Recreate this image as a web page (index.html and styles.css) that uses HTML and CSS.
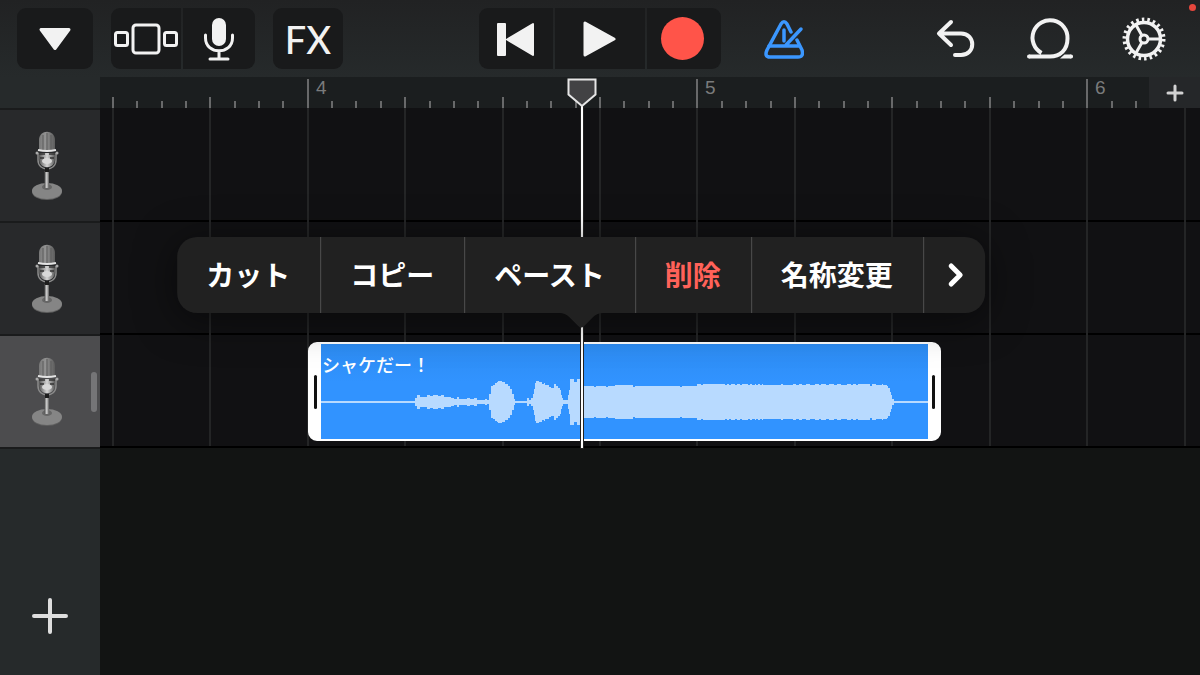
FILE: index.html
```html
<!DOCTYPE html>
<html lang="ja">
<head>
    <meta charset="UTF-8">
    <meta name="viewport" content="width=device-width, initial-scale=1.0">
    <title>GarageBand</title>
    <link rel="stylesheet" href="styles.css">
</head>
<body>
    <svg class="symbols" aria-hidden="true">
        <defs>
            <linearGradient id="micMetal">
                <stop offset="0" stop-color="#555"/>
                <stop offset="0.5" stop-color="#d5d5d5"/>
                <stop offset="1" stop-color="#5a5a5a"/>
            </linearGradient>
            <linearGradient id="micGrille">
                <stop offset="0" stop-color="#777"/>
                <stop offset="0.4" stop-color="#929292"/>
                <stop offset="1" stop-color="#5c5c5c"/>
            </linearGradient>
        </defs>
        <symbol id="mic" viewBox="0 0 32 70">
            <ellipse cx="15" cy="61" rx="15" ry="8" fill="#5f5f5f"/>
            <ellipse cx="15" cy="60" rx="15" ry="8" fill="#858585"/>
            <ellipse cx="15" cy="56" rx="5" ry="3" fill="#666"/>
            <path d="M12.500 40h4.500v17h-4.500z" fill="url(#micMetal)"/>
            <path d="M6 22v7c0 12 18 12 18 0v-7" fill="none" stroke="#8b8b8b" stroke-width="1.500"/>
            <path d="M13 37h4v4h-4z" fill="#1d1d1d"/>
            <path d="M7 22h16v6c0 11-16 11-16 0z" fill="url(#micMetal)"/>
            <path d="M7 19V9C7-2 23-2 23 9v10z" fill="url(#micGrille)"/>
            <path d="M11 4v15M15 2v17M19 4v15" stroke="#5a5a5a"/>
            <path d="M7 23h6M17 23h6M8 27h4M18 27h4" stroke="#333" stroke-width="1.500"/>
            <path d="M6 19q9 2 18 0" fill="none" stroke="#e4e4e4" stroke-width="2"/>
            <circle cx="5" cy="22" r="1.500" fill="#aaa"/>
            <circle cx="25" cy="22" r="1.500" fill="#aaa"/>
            <ellipse cx="15" cy="30" rx="5" ry="3" fill="#d8d8d8"/>
        </symbol>
    </svg>

    <header class="toolbar">
        <div class="toolbar-left">
            <button class="tool-btn browser-btn" aria-label="ブラウザ">
                <svg width="34" height="24" viewBox="0 0 34 24"><path d="M3 2.500h28L17 21.500z" fill="#f2f2f2" stroke="#f2f2f2" stroke-width="3" stroke-linejoin="round"/></svg>
            </button>
            <div class="btn-group">
                <button class="tool-btn view-btn" aria-label="トラック表示">
                    <svg width="64" height="32" viewBox="0 0 64 32" fill="none" stroke="#f2f2f2" stroke-width="3">
                        <rect x="1.500" y="9.500" width="12" height="13" rx="2"/>
                        <rect x="19" y="2" width="26" height="28" rx="3"/>
                        <rect x="50.500" y="9.500" width="12" height="13" rx="2"/>
                    </svg>
                </button>
                <button class="tool-btn input-btn" aria-label="入力">
                    <svg width="32" height="44" viewBox="0 0 32 44" fill="none" stroke="#f2f2f2" stroke-width="3" stroke-linecap="round">
                        <rect x="9" y="1" width="14" height="28" rx="7" fill="#f2f2f2" stroke="none"/>
                        <path d="M2.500 18v3c0 17 27 17 27 0v-3M16 34v7M7 42h18"/>
                    </svg>
                </button>
            </div>
            <button class="tool-btn fx-btn">FX</button>
        </div>

        <div class="btn-group transport">
            <button class="tool-btn rewind-btn" aria-label="先頭へ">
                <svg width="38" height="34" viewBox="0 0 38 34" fill="#f2f2f2" stroke="#f2f2f2" stroke-width="2" stroke-linejoin="round"><path d="M2 2h7v31H2zM11 17.500L37 2v31z"/></svg>
            </button>
            <button class="tool-btn play-btn" aria-label="再生">
                <svg width="34" height="38" viewBox="0 0 34 38"><path d="M3 3v32l29-16z" fill="#f2f2f2" stroke="#f2f2f2" stroke-width="3" stroke-linejoin="round"/></svg>
            </button>
            <button class="tool-btn record-btn" aria-label="録音"><span class="record-dot"></span></button>
        </div>

        <div class="toolbar-right">
            <button class="icon-btn metronome-btn" aria-label="メトロノーム">
                <svg width="40" height="40" viewBox="0 0 40 40" fill="none" stroke="#3b97ff" stroke-width="3.500" stroke-linecap="round" stroke-linejoin="round">
                    <path d="M27 13L23 5Q20 .5 17 5L3 31Q0 38 6 38h28q6 0 4-7l-5-10"/>
                    <path d="M5 27h30M20 11v11M22 26L37 10"/>
                </svg>
            </button>
            <button class="icon-btn" aria-label="取り消す">
                <svg width="40" height="40" viewBox="0 0 40 40" fill="none" stroke="#f2f2f2" stroke-width="4" stroke-linecap="round" stroke-linejoin="round"><path d="M15 3L3 14.500 15 26M3 14.500h22c15 0 15 21.500 0 21.500h-6"/></svg>
            </button>
            <button class="icon-btn" aria-label="ループ">
                <svg width="48" height="44" viewBox="0 0 48 44" fill="none" stroke="#f2f2f2" stroke-width="4">
                    <path d="M15.500 36A17.500 17.500 0 1 1 41.500 21.500C41.500 33 34 39.500 24 39.500H3"/>
                    <path d="M3 39.500h.1M45 39.500h.1" stroke-linecap="round"/>
                    <path d="M34 41.500l4.500-4H45v4z" fill="#f2f2f2" stroke="none"/>
                </svg>
            </button>
            <button class="icon-btn" aria-label="設定">
                <svg width="44" height="44" viewBox="0 0 44 44" fill="none" stroke="#f2f2f2">
                    <circle cx="22" cy="22" r="19.500" stroke-width="4" stroke-dasharray="2.500 3.069"/>
                    <circle cx="22" cy="22" r="16.500" stroke-width="3.500"/>
                    <circle cx="22" cy="22" r="4" stroke-width="3"/>
                    <path d="M27 22h11M19.500 17.700L14 8M19.500 26.300L14 36" stroke-width="3"/>
                </svg>
            </button>
        </div>
        <span class="rec-indicator"></span>
    </header>

    <main class="workspace">
        <aside class="track-list">
            <div class="track-corner"></div>
            <button class="track-head" aria-label="トラック 1"><svg class="mic-icon"><use href="#mic"/></svg></button>
            <button class="track-head" aria-label="トラック 2"><svg class="mic-icon"><use href="#mic"/></svg></button>
            <button class="track-head selected" aria-label="トラック 3"><svg class="mic-icon"><use href="#mic"/></svg><span class="track-grip"></span></button>
            <div class="track-footer">
                <button class="add-track" aria-label="トラックを追加">
                    <svg width="38" height="38" viewBox="0 0 38 38" stroke="#dedede" stroke-width="4" stroke-linecap="round"><path d="M19 3v32M3 19h32"/></svg>
                </button>
            </div>
        </aside>

        <section class="timeline">
            <div class="ruler" id="ruler">
                <button class="add-section" aria-label="セクションを追加">
                    <svg width="18" height="18" viewBox="0 0 18 18" stroke="#d2d2d2" stroke-width="3" stroke-linecap="round"><path d="M9 2v14M2 9h14"/></svg>
                </button>
            </div>
            <div class="lanes" id="lanes">
                <div class="lane"></div>
                <div class="lane"></div>
                <div class="lane">
                    <div class="region">
                        <span class="region-handle"></span>
                        <div class="region-body">
                            <span class="region-name">シャケだー！</span>
                            <svg class="waveform" viewBox="0 0 607 95" preserveAspectRatio="none"><path id="wave" fill="#b8daff" shape-rendering="crispEdges"/></svg>
                        </div>
                        <span class="region-handle"></span>
                    </div>
                </div>
            </div>

            <div class="playhead">
                <svg class="playhead-flag" width="30" height="30" viewBox="0 0 30 30"><path d="M1.500 1.500h27v15L15 28 1.500 16.500z" fill="#424244" stroke="#e6e6e6" stroke-width="2"/></svg>
            </div>

            <div class="edit-menu" role="menu">
                <button role="menuitem">カット</button>
                <button role="menuitem">コピー</button>
                <button role="menuitem">ペースト</button>
                <button role="menuitem" class="danger">削除</button>
                <button role="menuitem">名称変更</button>
                <button role="menuitem" class="more" aria-label="次へ">
                    <svg width="18" height="26" viewBox="0 0 18 26" fill="none" stroke="#fff" stroke-width="5" stroke-linecap="round" stroke-linejoin="round"><path d="M4 4l9 9-9 9"/></svg>
                </button>
                <svg class="menu-arrow" width="44" height="16" viewBox="0 0 44 16"><path d="M0 0Q6 0 10 4L19 13Q22 16 25 13L34 4Q38 0 44 0z" fill="#212121"/></svg>
            </div>
        </section>
    </main>

    <script src="script.js"></script>
</body>
</html>
```

FILE: styles.css
```css
* {
    box-sizing: border-box;
}
body {
    margin: 0;
    min-height: 100vh;
    display: flex;
    flex-direction: column;
    background-color: #121413;
    color: #fff;
    font-family: "Liberation Sans", "Noto Sans CJK JP", sans-serif;
    overflow: hidden;
}
button {
    margin: 0;
    padding: 0;
    border: none;
    background: none;
    color: inherit;
    font: inherit;
    cursor: pointer;
}
svg {
    display: block;
}
.symbols {
    position: absolute;
    width: 0;
    height: 0;
}

/* toolbar */
.toolbar {
    position: relative;
    display: grid;
    grid-template-columns: 1fr auto 1fr;
    padding: 8px 17px;
    background: linear-gradient(#212223, #262a2b);
}
.toolbar-left {
    display: flex;
    gap: 18px;
}
.toolbar-right {
    display: flex;
    align-items: center;
    gap: 34px;
    padding-right: 9px;
    padding-left: 33px;
}
.btn-group {
    display: flex;
    gap: 2px;
    border-radius: 9px;
    overflow: hidden;
}
.tool-btn {
    display: flex;
    align-items: center;
    justify-content: center;
    height: 61px;
    background-color: #191a1b;
}
.transport .tool-btn {
    padding-right: 3px;
}
.browser-btn {
    width: 76px;
    border-radius: 9px;
}
.view-btn {
    width: 70px;
}
.input-btn {
    width: 72px;
}
.fx-btn {
    width: 70px;
    border-radius: 9px;
    color: #f2f2f2;
    font-family: Lato, sans-serif;
    font-size: 38px;
    font-weight: 500;
}
.rewind-btn,
.record-btn {
    width: 74px;
}
.play-btn {
    width: 90px;
}
.record-dot {
    width: 43px;
    height: 43px;
    border-radius: 50%;
    background-color: #ff5449;
}
.icon-btn {
    display: flex;
    align-items: center;
    justify-content: center;
    width: 60px;
    height: 61px;
}
.metronome-btn {
    margin-right: auto;
}
.rec-indicator {
    position: absolute;
    top: 4px;
    right: 4px;
    width: 7px;
    height: 7px;
    border-radius: 50%;
    background-color: #e5473d;
}

/* tracks */
.workspace {
    flex: 1;
    display: flex;
}
.track-list {
    width: 100px;
    display: flex;
    flex-direction: column;
    background-color: #262a2b;
}
.track-corner {
    height: 31px;
}
.track-head {
    position: relative;
    display: flex;
    align-items: center;
    justify-content: center;
    height: 113px;
    padding-right: 4px;
    border-top: 2px solid #1a1b1c;
    background-color: #28292b;
}
.track-head.selected {
    background-color: #4c4c4e;
}
.mic-icon {
    width: 32px;
    height: 70px;
}
.track-grip {
    position: absolute;
    top: 36px;
    right: 3px;
    width: 6px;
    height: 40px;
    border-radius: 3px;
    background-color: #757577;
}
.track-footer {
    flex: 1;
    display: flex;
    align-items: flex-end;
    justify-content: center;
    padding-bottom: 40px;
    border-top: 2px solid #1a1b1c;
}

/* timeline */
.timeline {
    position: relative;
    flex: 1;
    min-width: 0;
}
.ruler {
    position: relative;
    display: flex;
    justify-content: flex-end;
    height: 31px;
    background-color: #1b1e1f;
    overflow: hidden;
}
.tick {
    position: absolute;
    bottom: 0;
    width: 2px;
    height: 7px;
    background-color: #68696a;
}
.tick.beat {
    height: 11px;
}
.tick.bar {
    height: 29px;
}
.bar-number {
    position: absolute;
    top: 0;
    color: #7a7b7c;
    font-size: 19px;
    line-height: 22px;
}
.add-section {
    position: relative;
    z-index: 1;
    display: flex;
    align-items: center;
    justify-content: center;
    width: 51px;
    background-color: #252729;
}
.lanes {
    position: relative;
    padding-top: 1px;
    background-color: #111113;
    overflow: hidden;
}
.lane {
    height: 113px;
    border-bottom: 2px solid #000;
}
.grid-line {
    position: absolute;
    top: 0;
    bottom: 2px;
    width: 2px;
    background-color: #242526;
}
.region {
    position: absolute;
    z-index: 1;
    left: 208px;
    bottom: 7px;
    display: flex;
    width: 633px;
    height: 99px;
    border: 2px solid #fff;
    border-radius: 9px;
    background-color: #fff;
    overflow: hidden;
}
.region-handle {
    display: flex;
    flex: 1;
    align-items: center;
    justify-content: center;
}
.region-handle::before {
    content: "";
    width: 3px;
    height: 34px;
    border-radius: 2px;
    background-color: #111;
}
.region-body {
    position: relative;
    width: 607px;
    background: linear-gradient(#2d8cf2, #3193ff 40%);
}
.region-name {
    position: absolute;
    top: 8px;
    left: 1px;
    font-family: "Noto Sans CJK JP", sans-serif;
    font-size: 18px;
    font-weight: 500;
    line-height: 24px;
}
.waveform {
    width: 100%;
    height: 100%;
}

/* playhead */
.playhead {
    position: absolute;
    z-index: 2;
    top: 29px;
    left: 481px;
    width: 2px;
    height: 342px;
    background-color: #fff;
    box-shadow: 0 0 0 1px #222;
}
.playhead-flag {
    position: absolute;
    bottom: 100%;
    left: 50%;
    margin-bottom: -2px;
    transform: translateX(-50%);
}

/* edit menu */
.edit-menu {
    position: absolute;
    z-index: 3;
    top: 160px;
    left: 481px;
    display: flex;
    height: 76px;
    border-radius: 20px;
    background-color: #212121;
    box-shadow: 0 6px 40px rgba(0, 0, 0, 0.5);
    font-family: "Noto Sans CJK JP", sans-serif;
    font-size: 28px;
    font-weight: 700;
    white-space: nowrap;
    transform: translateX(-50%);
}
.edit-menu button {
    padding: 0 30px 3px 29px;
    border-right: 1px solid #505050;
}
.edit-menu .danger {
    color: #ff6259;
}
.edit-menu .more {
    padding: 0 20px 0 23px;
    border-right: none;
}
.menu-arrow {
    position: absolute;
    top: 100%;
    left: 50%;
    transform: translateX(-50%);
}
```

FILE: script.js
```js
// ruler and grid: 16 ticks to a bar, bar 4 starts near x = 207
const TICK = 24.36;
const BAR_4 = 206.7;
const ruler = document.getElementById('ruler');
const lanes = document.getElementById('lanes');

function addMark(parent, className, x, text) {
    const el = document.createElement('span');
    el.className = className;
    el.style.left = Math.round(x) + 'px';
    if (text) el.textContent = text;
    parent.appendChild(el);
}

for (let i = -8; BAR_4 + i * TICK < ruler.clientWidth; i++) {
    const x = BAR_4 + i * TICK;
    if (i % 16 === 0) {
        addMark(ruler, 'tick bar', x);
        addMark(ruler, 'bar-number', x + 9, String(4 + i / 16));
    } else {
        addMark(ruler, i % 4 === 0 ? 'tick beat' : 'tick', x);
    }
    if (i % 4 === 0) addMark(lanes, 'grid-line', x);
}

// waveform: [start x, half height]
const wave = [
    [0, 1], [94, 4], [96, 7], [99, 5], [106, 7], [109, 6], [112, 7], [117, 6], [120, 7], [123, 5],
    [130, 4], [133, 3], [136, 5], [138, 3], [146, 4], [149, 3], [153, 4], [156, 2], [164, 3],
    [166, 2], [168, 8], [170, 16], [172, 17], [174, 19], [176, 20], [177, 21], [181, 20], [184, 18],
    [187, 16], [189, 13], [191, 8], [193, 3], [194, 1], [206, 4], [208, 2], [210, 4], [212, 8],
    [213, 13], [214, 19], [215, 21], [218, 20], [221, 18], [223, 19], [224, 17], [228, 15],
    [230, 14], [233, 18], [235, 16], [237, 14], [239, 12], [240, 7], [241, 4], [242, 2], [247, 7],
    [248, 12], [249, 23], [253, 20], [256, 23], [259, 16], [273, 15], [275, 16], [285, 15], [287, 16],
    [294, 17], [312, 15], [314, 16], [359, 15], [361, 16], [376, 18], [380, 17], [382, 18],
    [404, 17], [406, 18], [408, 17], [410, 18], [414, 17], [416, 18], [419, 17], [421, 18],
    [427, 17], [429, 18], [431, 17], [434, 18], [435, 17], [437, 18], [439, 17], [441, 18],
    [442, 17], [460, 18], [462, 17], [472, 18], [475, 17], [478, 18], [481, 17], [485, 18],
    [489, 17], [494, 18], [498, 17], [500, 18], [505, 17], [508, 18], [513, 17], [516, 18],
    [520, 17], [526, 18], [530, 17], [532, 18], [535, 17], [537, 18], [549, 16], [551, 18],
    [555, 17], [561, 18], [562, 17], [566, 16], [567, 14], [569, 10], [570, 7], [571, 3],
    [573, 1], [607, 1]
];
let d = '';
for (let i = 0; i < wave.length - 1; i++) {
    const [x, h] = wave[i];
    d += `M${x} ${58 - h}H${wave[i + 1][0]}V${58 + h}H${x}z`;
}
document.getElementById('wave').setAttribute('d', d);
```
